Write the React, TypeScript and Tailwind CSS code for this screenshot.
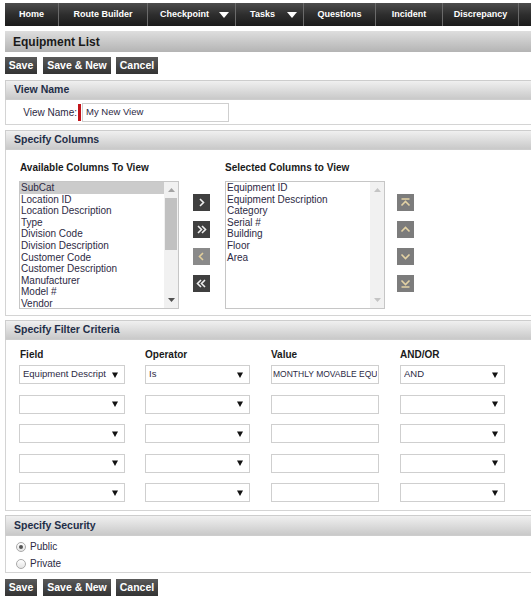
import type { ReactNode } from "react";

type NavDef = { label: string; w: number; caret?: boolean };

const NAV: NavDef[] = [
  { label: "Home", w: 53 },
  { label: "Route Builder", w: 89 },
  { label: "Checkpoint", w: 88, caret: true },
  { label: "Tasks", w: 68, caret: true },
  { label: "Questions", w: 72 },
  { label: "Incident", w: 67 },
  { label: "Discrepancy", w: 76 },
  { label: "", w: 70 },
];

const AVAILABLE = [
  "SubCat",
  "Location ID",
  "Location Description",
  "Type",
  "Division Code",
  "Division Description",
  "Customer Code",
  "Customer Description",
  "Manufacturer",
  "Model #",
  "Vendor",
];

const SELECTED = ["Equipment ID", "Equipment Description", "Category", "Serial #", "Building", "Floor", "Area"];

function NavBar() {
  return (
    <div className="flex h-[23px] bg-gradient-to-b from-[#4d4d4d] via-[#2e2e2e] to-[#1b1b1b]">
      {NAV.map((n, i) => (
        <div
          key={i}
          style={{ width: n.w }}
          className={`relative flex shrink-0 items-center justify-center text-[9px] font-bold text-white ${
            i > 0 ? "border-l border-[#6a6a6a]" : ""
          }`}
        >
          {n.label && <span className={n.caret ? "-ml-[14px]" : ""}>{n.label}</span>}
          {n.caret && (
            <svg className="absolute right-[6px] top-[9px]" width="10" height="6" viewBox="0 0 10 6">
              <path d="M0 0H10L5 6Z" fill="#fff" />
            </svg>
          )}
        </div>
      ))}
    </div>
  );
}

function DarkButton({ label, w }: { label: string; w: number }) {
  return (
    <button
      type="button"
      style={{ width: w }}
      className="flex h-[17px] items-center justify-center bg-gradient-to-b from-[#5a5a5a] to-[#333] text-[10.5px] font-bold text-white"
    >
      {label}
    </button>
  );
}

function ButtonRow() {
  return (
    <div className="flex">
      <DarkButton label="Save" w={32} />
      <div className="ml-[6px]">
        <DarkButton label="Save & New" w={68} />
      </div>
      <div className="ml-[5px]">
        <DarkButton label="Cancel" w={42} />
      </div>
    </div>
  );
}

function Section({ title, h, children, hh = 20 }: { title: string; h: number; hh?: number; children: ReactNode }) {
  return (
    <div>
      <div
        style={{ height: hh }}
        className="flex items-center border border-[#cdcdcd] bg-gradient-to-b from-[#f0f0f0] to-[#c9c9c9] pl-[8px] text-[10.5px] font-bold text-[#1f2e48]"
      >
        {title}
      </div>
      <div style={{ height: h }} className="relative border-x border-b border-[#d4d4d4] bg-white">
        {children}
      </div>
    </div>
  );
}

function ListBox({ items, thumb, highlight }: { items: string[]; thumb?: boolean; highlight?: number }) {
  return (
    <div className="flex h-[128px] w-[160px] border border-[#c6c6c6] bg-white">
      <div className="flex-1 overflow-hidden">
        {items.map((it, i) => (
          <div
            key={it}
            className={`h-[11.6px] pl-[1px] text-[10px] leading-[11.6px] text-[#2d2a44] ${
              i === highlight ? "bg-[#cbcbcb]" : ""
            }`}
          >
            {it}
          </div>
        ))}
      </div>
      <div className="flex w-[14px] flex-col items-center bg-[#f1f1f1]">
        <svg className="mt-[6px]" width="7" height="4" viewBox="0 0 7 4">
          <path d="M0 4L3.5 0L7 4Z" fill={thumb ? "#a3a3a3" : "#c4c4c4"} />
        </svg>
        <div className="flex-1 self-stretch px-[1px] pt-[6px]">
          {thumb && <div className="h-[52px] w-full bg-[#c1c1c1]" />}
        </div>
        <svg className="mb-[6px]" width="7" height="4" viewBox="0 0 7 4">
          <path d="M0 0L3.5 4L7 0Z" fill={thumb ? "#505050" : "#c4c4c4"} />
        </svg>
      </div>
    </div>
  );
}

function IconBtn({ d, light, tan }: { d: string; light?: boolean; tan?: boolean }) {
  return (
    <div className={`flex h-[17px] w-[17px] items-center justify-center ${light ? "bg-[#8a8a8a]" : "bg-[#3f3f3f]"}`}>
      <svg width="17" height="17" viewBox="0 0 17 17">
        <path d={d} fill="none" stroke={tan ? "#e2cf9c" : "#eeeeee"} strokeWidth="1.6" />
      </svg>
    </div>
  );
}

function OrderBtn({ d }: { d: string }) {
  return (
    <div className="flex h-[17px] w-[17px] items-center justify-center bg-[#7c7c7c]">
      <svg width="17" height="17" viewBox="0 0 17 17">
        <path d={d} fill="none" stroke="#e3d2a4" strokeWidth="1.6" />
      </svg>
    </div>
  );
}

function Select({ value, w }: { value?: string; w: number }) {
  return (
    <div
      style={{ width: w }}
      className="flex h-[19px] items-center border border-[#cfcfcf] bg-white pl-[3px] pr-[6px] text-[9.5px] text-[#2d2a44]"
    >
      <span className="flex-1 overflow-hidden whitespace-nowrap">{value}</span>
      <svg className="ml-[4px] shrink-0" width="6" height="6" viewBox="0 0 6 6">
        <path d="M0 0.5H6L3 6Z" fill="#111" />
      </svg>
    </div>
  );
}

function TextBox({ value, w }: { value?: string; w: number }) {
  return (
    <div
      style={{ width: w }}
      className="flex h-[19px] items-center overflow-hidden border border-[#cfcfcf] bg-white pl-[1px] text-[8.5px] text-[#2d2a44]"
    >
      <span className="overflow-hidden whitespace-nowrap">{value}</span>
    </div>
  );
}

function FilterRow({ first }: { first?: boolean }) {
  return (
    <div className="flex">
      <Select w={106} value={first ? "Equipment Descript" : undefined} />
      <div className="ml-[20px]">
        <Select w={105} value={first ? "Is" : undefined} />
      </div>
      <div className="ml-[21px]">
        <TextBox w={108} value={first ? "MONTHLY MOVABLE EQU" : undefined} />
      </div>
      <div className="ml-[21px]">
        <Select w={105} value={first ? "AND" : undefined} />
      </div>
    </div>
  );
}

function Radio({ checked, label }: { checked?: boolean; label: string }) {
  return (
    <div className="flex h-[17px] items-center">
      <div className="flex h-[10px] w-[10px] items-center justify-center rounded-full border border-[#a9a9a9] bg-gradient-to-b from-white to-[#e4e4e4]">
        {checked && <div className="h-[4px] w-[4px] rounded-full bg-[#555]" />}
      </div>
      <span className="ml-[4px] text-[10px] text-[#2d2a44]">{label}</span>
    </div>
  );
}

export default function App() {
  return (
    <div className="h-[599px] w-[531px] overflow-hidden bg-white font-['Liberation_Sans',Arial,sans-serif]">
      <div className="w-[545px] pl-[5px] pt-[3px]">
        <NavBar />

        <div className="mt-[5px] flex h-[21px] items-center bg-gradient-to-b from-[#dedede] to-[#b4b4b4] pl-[8px] text-[12px] font-bold text-[#1a1a1a]">
          Equipment List
        </div>

        <div className="mt-[5px]">
          <ButtonRow />
        </div>

        <div className="mt-[6px]">
          <Section title="View Name" h={25}>
            <div className="flex items-center pt-[3px]">
              <span className="w-[71px] text-right text-[10px] text-[#2d2a44]">View Name:</span>
              <div className="ml-[1px] h-[17px] w-[3px] bg-[#c2151b]" />
              <div className="ml-[1px] flex h-[19px] w-[147px] items-center border border-[#cfcfcf] pl-[3px] text-[9.5px] text-[#2d2a44]">
                My New View
              </div>
            </div>
          </Section>
        </div>

        <div className="mt-[5px]">
          <Section title="Specify Columns" h={166}>
            <div className="flex pl-[13px] pt-[10px]">
              <div>
                <div className="mb-[6px] pl-[1px] text-[10px] font-bold text-[#1a1a1a]">Available Columns To View</div>
                <ListBox items={AVAILABLE} thumb highlight={0} />
              </div>
              <div className="ml-[14px] flex flex-col gap-[10px] pt-[34px]">
                <IconBtn d="M7 5L10.5 8.5L7 12" />
                <IconBtn d="M5 5L8.5 8.5L5 12M9 5L12.5 8.5L9 12" />
                <IconBtn d="M10 5L6.5 8.5L10 12" light tan />
                <IconBtn d="M8 5L4.5 8.5L8 12M12 5L8.5 8.5L12 12" />
              </div>
              <div className="ml-[15px]">
                <div className="mb-[6px] text-[10px] font-bold text-[#1a1a1a]">Selected Columns to View</div>
                <ListBox items={SELECTED} />
              </div>
              <div className="ml-[12px] flex flex-col gap-[10px] pt-[34px]">
                <OrderBtn d="M4.5 5H12.5M4.5 11.5L8.5 7.5L12.5 11.5" />
                <OrderBtn d="M4.5 10.5L8.5 6.5L12.5 10.5" />
                <OrderBtn d="M4.5 6.5L8.5 10.5L12.5 6.5" />
                <OrderBtn d="M4.5 5.5L8.5 9.5L12.5 5.5M4.5 12H12.5" />
              </div>
            </div>
          </Section>
        </div>

        <div className="mt-[4px]">
          <Section title="Specify Filter Criteria" h={171}>
            <div className="pl-[13px] pt-[7px]">
              <div className="flex text-[10px] font-bold text-[#1a1a1a]">
                <span className="w-[126px] pl-[1px]">Field</span>
                <span className="w-[126px]">Operator</span>
                <span className="w-[129px]">Value</span>
                <span>AND/OR</span>
              </div>
              <div className="mt-[3px] flex flex-col gap-[10.5px]">
                <FilterRow first />
                <FilterRow />
                <FilterRow />
                <FilterRow />
                <FilterRow />
              </div>
            </div>
          </Section>
        </div>

        <div className="mt-[4px]">
          <Section title="Specify Security" h={37} hh={21}>
            <div className="pl-[10px] pt-[2px]">
              <Radio checked label="Public" />
              <Radio label="Private" />
            </div>
          </Section>
        </div>

        <div className="mt-[6px]">
          <ButtonRow />
        </div>
      </div>
    </div>
  );
}
